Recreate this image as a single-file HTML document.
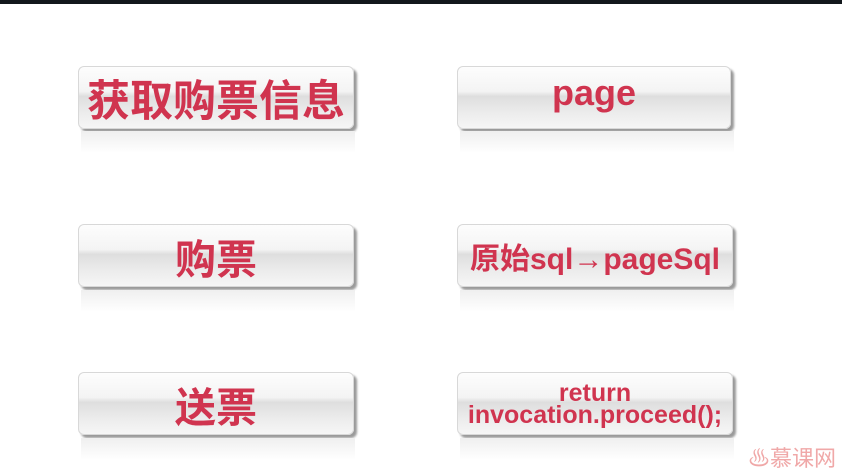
<!DOCTYPE html><html><head><style>
body{margin:0;width:842px;height:474px;background:#fff;position:relative;overflow:hidden;font-family:"Liberation Sans","Noto Sans CJK SC",sans-serif}
.bar{position:absolute;left:0;top:0;width:842px;height:4px;background:#12171c}
.b{position:absolute;width:274px;height:61px;border-radius:6px;border:1px solid #d8d8d8;
background:linear-gradient(#fdfdfd 0%,#f4f4f4 40%,#dedede 48%,#ececec 75%,#f6f6f6 100%);
box-shadow:3px 3px 2px #9a9a9a;display:flex;align-items:center;justify-content:center;color:#d0344f;font-weight:bold;text-align:center}
.r{position:absolute;width:274px;height:22px;background:linear-gradient(#efefef,#fff)}
</style></head><body>
<div class="bar"></div>
<div class="b" style="left:78px;top:66px;font-size:43px">获取购票信息</div>
<div class="r" style="left:81px;top:131px"></div>
<div class="b" style="left:457px;top:66px;font-size:36px;padding-bottom:10px;box-sizing:border-box;height:63px">page</div>
<div class="r" style="left:460px;top:131px"></div>
<div class="b" style="left:78px;top:224px;font-size:41px">购票</div>
<div class="r" style="left:81px;top:290px"></div>
<div class="b" style="left:457px;top:224px;font-size:30px">原始sql→pageSql</div>
<div class="r" style="left:460px;top:290px"></div>
<div class="b" style="left:78px;top:372px;font-size:41px">送票</div>
<div class="r" style="left:81px;top:438px"></div>
<div class="b" style="left:457px;top:372px;font-size:25px;line-height:22px">return<br>invocation.proceed();</div>
<div class="r" style="left:460px;top:438px"></div>
<div style="position:absolute;left:748px;top:441px;font-size:22px;color:#f0a8a8;font-family:'Noto Sans CJK SC',sans-serif">♨慕课网</div>
</body></html>
